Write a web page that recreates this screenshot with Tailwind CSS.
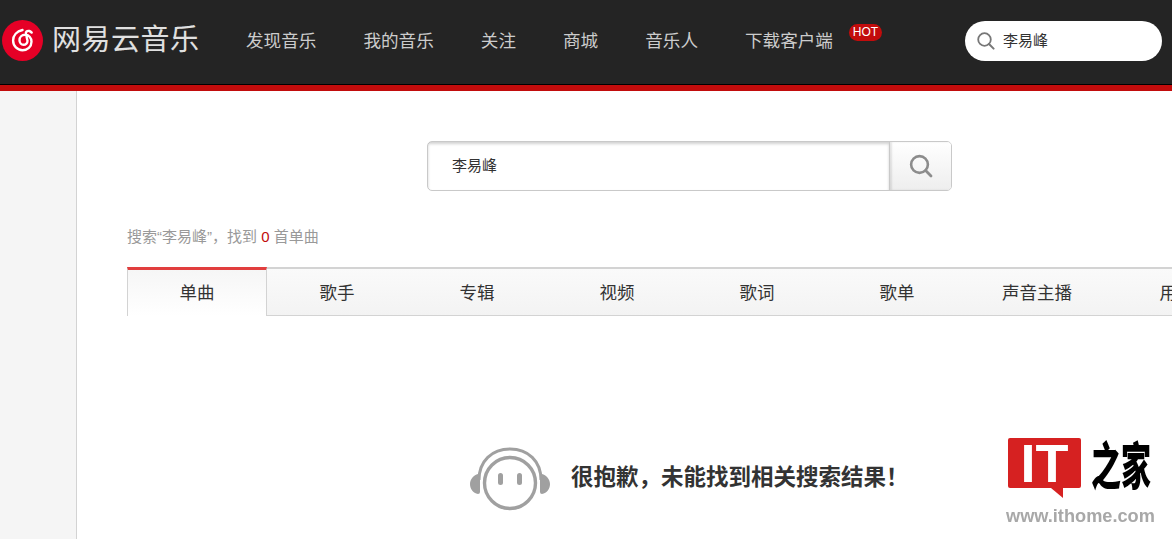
<!DOCTYPE html>
<html lang="zh-CN">
  <head>
    <meta charset="UTF-8" />
    <meta name="viewport" content="width=device-width, initial-scale=1.0" />
    <title>网易云音乐</title>
    <script src="https://cdn.jsdelivr.net/npm/@tailwindcss/browser@4"></script>
  </head>
  <body class="h-[539px] overflow-hidden bg-white font-['Liberation_Sans','Noto_Sans_CJK_SC',sans-serif]">
    <!-- Top bar -->
    <header class="h-[85px] bg-[#242424] border-b border-black flex items-center relative">
      <div class="flex items-center ml-[2px] w-[244px] mb-[3px]">
        <svg width="41" height="41" viewBox="0 0 41 41" class="shrink-0">
          <circle cx="20.5" cy="20.5" r="20.5" fill="#e60026" />
          <path d="M20.5 10c-5.6 1.2-9.4 5.4-9.4 10.6 0 5.4 4.2 9.6 9.4 9.6 5 0 9-3.6 9-8.4 0-4-2.8-7-6.4-7-3.2 0-5.6 2.4-5.6 5.4 0 2.6 1.8 4.6 4 4.6 2.4 0 4-1.8 4-4l-1.6-7c-.4-1.8 1.2-3.4 3.4-2.8 1 .3 1.8.9 2.4 1.6" fill="none" stroke="#fff" stroke-width="2.4" stroke-linecap="round" />
        </svg>
        <span class="ml-[9px] text-[29px] leading-none font-normal tracking-[0.5px] text-[#e0e0e0] whitespace-nowrap">网易云音乐</span>
      </div>
      <nav class="flex gap-[47px] text-[17.6px] text-[#cccccc] whitespace-nowrap mb-[2px]">
        <a>发现音乐</a>
        <a>我的音乐</a>
        <a>关注</a>
        <a>商城</a>
        <a>音乐人</a>
        <a class="relative">下载客户端
          <span class="absolute left-[104px] -top-[4px] w-[33px] h-[17px] rounded-full bg-[#c20c0c] text-white text-[12px] leading-[17px] text-center">HOT</span>
        </a>
      </nav>
      <div class="absolute left-[965px] top-[21px] w-[197px] h-[40px] rounded-full bg-white flex items-center pl-[12px]">
        <svg width="18" height="18" viewBox="0 0 18 18" class="shrink-0">
          <circle cx="7.5" cy="7.5" r="6.3" fill="none" stroke="#777" stroke-width="1.8" />
          <path d="M12 12l4.6 4.6" stroke="#777" stroke-width="2" stroke-linecap="round" />
        </svg>
        <span class="ml-[8px] text-[15px] text-[#333]">李易峰</span>
      </div>
    </header>
    <div class="h-[6px] bg-[#c20c0c]"></div>

    <div class="flex h-[448px]">
      <aside class="w-[77px] shrink-0 bg-[#f5f5f5] border-r border-[#d3d3d3]"></aside>

      <main class="flex-1 min-w-0 overflow-hidden pl-[50px] relative">
        <!-- Search box -->
        <div class="ml-[300px] mt-[50px] w-[525px] h-[50px] flex rounded-[5px] border border-[#c9c9c9] overflow-hidden">
          <div class="flex-1 flex items-center pl-[24px] text-[15px] text-[#333] shadow-[inset_0_2px_3px_rgba(0,0,0,0.18)]">李易峰</div>
          <div class="w-[62px] flex items-center justify-center border-l border-[#c9c9c9] bg-gradient-to-b from-white to-[#eeeeee] shadow-[inset_2px_0_2px_rgba(0,0,0,0.1)]">
            <svg width="24" height="24" viewBox="0 0 24 24">
              <circle cx="10.5" cy="10.5" r="8.4" fill="none" stroke="#8c8c8c" stroke-width="2.6" />
              <path d="M16.6 16.6l5.4 5.4" stroke="#8c8c8c" stroke-width="2.8" stroke-linecap="round" />
            </svg>
          </div>
        </div>

        <p class="mt-[35px] text-[15px] leading-[22px] text-[#999]">搜索“李易峰”，找到 <span class="text-[#c20c0c]">0</span> 首单曲</p>

        <!-- Tabs -->
        <div class="mt-[19px] h-[49px] flex w-[1120px] border-t-2 border-b border-t-[#d3d3d3] border-b-[#d3d3d3] bg-gradient-to-b from-[#fafafa] to-[#f3f3f3] text-[17.5px] text-[#333]">
          <a class="w-[140px] -mt-[2px] -mb-px border-t-[3px] border-t-[#e13e3e] border-x border-x-[#d3d3d3] bg-gradient-to-b from-[#f6f6f6] to-white flex items-center justify-center">单曲</a>
          <a class="w-[140px] pt-[2px] flex items-center justify-center">歌手</a>
          <a class="w-[140px] pt-[2px] flex items-center justify-center">专辑</a>
          <a class="w-[140px] pt-[2px] flex items-center justify-center">视频</a>
          <a class="w-[140px] pt-[2px] flex items-center justify-center">歌词</a>
          <a class="w-[140px] pt-[2px] flex items-center justify-center">歌单</a>
          <a class="w-[140px] pt-[2px] flex items-center justify-center">声音主播</a>
          <a class="w-[140px] pt-[2px] flex items-center justify-center">用户</a>
        </div>

        <!-- Empty state -->
        <div class="mt-[131px] ml-[343px] flex items-center">
          <svg width="80" height="64" viewBox="0 0 80 64" class="shrink-0">
            <path d="M9 33C9 14 22 2 40 2s31 12 31 31" fill="none" stroke="#a0a0a0" stroke-width="3" />
            <circle cx="40" cy="36" r="25.5" fill="none" stroke="#a0a0a0" stroke-width="3.4" />
            <path d="M8 27c-4 1-8 5-8 10s3 9 8 10a2 2 0 0 0 2-2V29a2 2 0 0 0-2-2zM72 27c4 1 8 5 8 10s-3 9-8 10a2 2 0 0 1-2-2V29a2 2 0 0 1 2-2z" fill="#a0a0a0" />
            <rect x="28" y="26" width="5" height="12" rx="2.5" fill="#a0a0a0" />
            <rect x="47" y="26" width="5" height="12" rx="2.5" fill="#a0a0a0" />
          </svg>
          <h2 class="ml-[21px] -mt-[2px] text-[22.5px] font-bold text-[#333] whitespace-nowrap">很抱歉，未能找到相关搜索结果！</h2>
        </div>
      </main>
    </div>

    <!-- Watermark -->
    <div class="absolute left-[1006px] top-[438px] w-[150px] blur-[0.4px]">
      <div class="flex items-start pl-[2px]">
        <div class="relative w-[73px] h-[50px]">
          <div class="w-[73px] h-[50px] rounded-[2px] bg-[#d62121] text-white text-[54px] leading-[50px] font-bold text-center">IT</div>
          <div class="absolute left-[43px] top-[50px] border-t-[10px] border-t-[#d62121] border-l-[12px] border-l-transparent"></div>
        </div>
        <span class="ml-[10px] text-[30px] leading-[50px] font-black text-black font-['Noto_Sans_CJK_SC',serif] whitespace-nowrap scale-y-[1.7]">之家</span>
      </div>
      <div class="mt-[19px] text-[18.2px] leading-[18px] font-bold text-[#a8a8a8] whitespace-nowrap">www.ithome.com</div>
    </div>
  </body>
</html>
